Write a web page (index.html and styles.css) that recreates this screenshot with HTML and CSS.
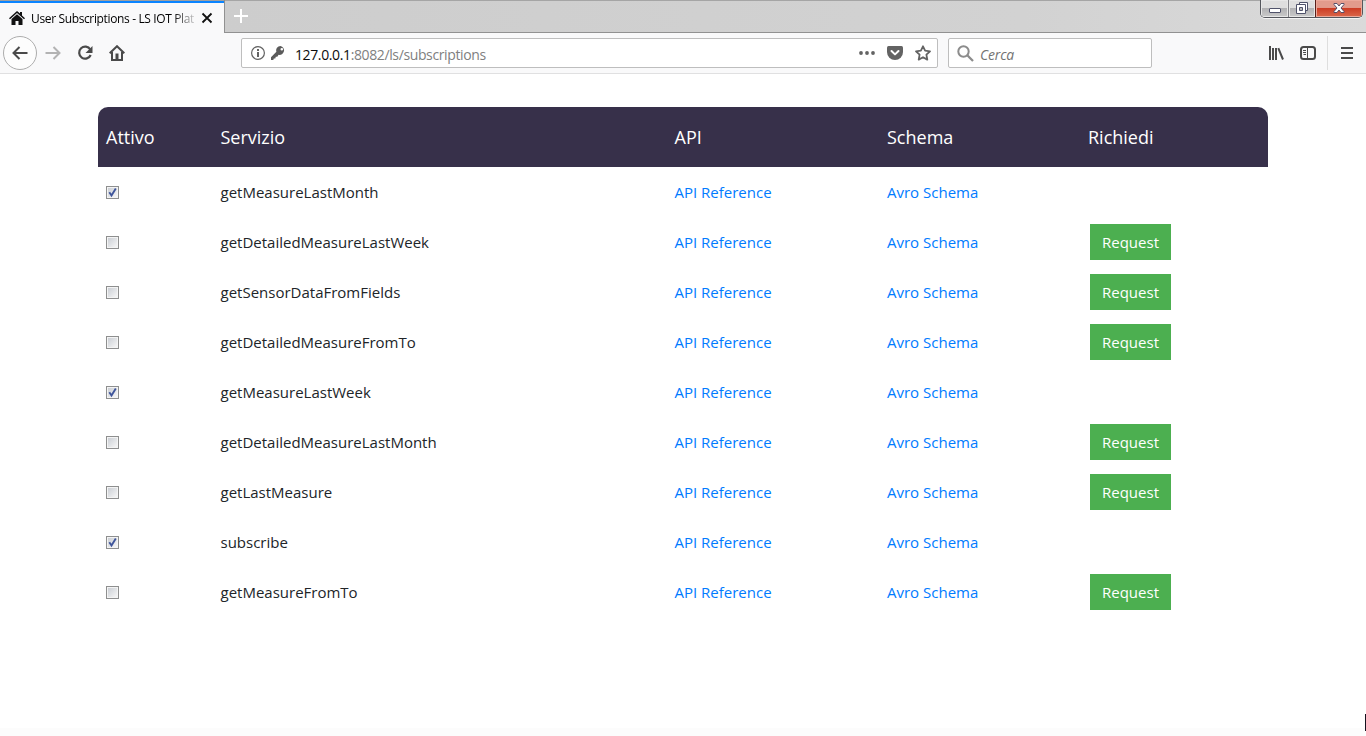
FILE: index.html
```html
<!DOCTYPE html>
<html lang="it">
<head>
<meta charset="utf-8">
<title>User Subscriptions - LS IOT Platform</title>
<link rel="stylesheet" href="styles.css">
</head>
<body>
<header class="tabs">
  <div class="tab">
    <svg class="favicon" width="16" height="16" viewBox="0 0 16 16"><path d="M8 1 0 8.2l1 1.1L8 3l7 6.3 1-1.1-3-2.8V2h-2v1.6z" fill="#111"/><path d="M8 4.2 2.500 9v6h4v-4h3v4h4V9z" fill="#111"/></svg>
    <span class="tab-title">User Subscriptions - LS IOT Plat</span>
    <svg class="tab-close" width="12" height="12" viewBox="0 0 12 12"><path d="m1.500 1.500 9 9m0-9-9 9" stroke="#111" stroke-width="1.800"/></svg>
  </div>
  <div class="strip">
    <svg class="plus" width="14" height="14" viewBox="0 0 14 14"><path d="M7 0v14M0 7h14" stroke="#fff" stroke-width="2"/></svg>
    <div class="win">
      <span class="win-btn min"><svg width="14" height="16" viewBox="0 0 14 16"><rect x="1.500" y="8.500" width="11" height="4" rx=".5" fill="#fff" stroke="#50536b"/></svg></span>
      <span class="win-btn max"><svg width="14" height="16" viewBox="0 0 14 16"><g fill="#fff" stroke="#50536b"><path d="M4.500 2.500h8v8h-8z"/><path d="M1.500 4.500h9v9h-9z"/><path d="M4.500 7.500h3v3h-3z" fill="#bbb"/></g></svg></span>
      <span class="win-btn quit"><svg width="14" height="16" viewBox="0 0 14 16"><path d="M2 3.500h3L7 6l2-2.500h3v1L9 8l3 3.500v1H9L7 10l-2 2.500H2v-1L5 8 2 4.500z" fill="#fff" stroke="#57506a"/></svg></span>
    </div>
  </div>
</header>
<nav class="toolbar">
  <span class="back"><svg width="16" height="16" viewBox="0 0 16 16"><path d="M15.500 8H1.500M7.500 2 1.500 8l6 6" fill="none" stroke="#4a4a4a" stroke-width="2"/></svg></span>
  <svg class="forward" width="16" height="16" viewBox="0 0 16 16"><path d="M.5 8h14M8.500 2l6 6-6 6" fill="none" stroke="#b3b3b3" stroke-width="2"/></svg>
  <svg class="reload" width="16" height="16" viewBox="0 0 16 16"><path d="M13.300 4.500A6 6 0 1 0 13.700 10" fill="none" stroke="#4a4a4a" stroke-width="2.200"/><path d="M15.500 1v7h-7z" fill="#4a4a4a"/></svg>
  <svg class="home" width="16" height="16" viewBox="0 0 16 16"><path d="M.7 8.300 8 1.200l7.300 7.100M3 7v8h10V7" fill="none" stroke="#4a4a4a" stroke-width="2"/><path d="M6.500 8.500h3V14h-3z" fill="#4a4a4a"/></svg>
  <div class="address">
    <svg class="info" width="14" height="14" viewBox="0 0 14 14"><circle cx="7" cy="7" r="6.400" fill="none" stroke="#636363" stroke-width="1.200"/><path d="M6 6h2v5H6zM6 3h2v2H6z" fill="#636363"/></svg>
    <svg class="key" width="14" height="14" viewBox="0 0 14 14"><path fill-rule="evenodd" d="M9.500 0A4.300 4.300 0 0 0 5.400 5.700L0 11.200V14h2.300l.5-1.500h1.500l.5-1.800h1.500l1.300-1.900A4.400 4.400 0 1 0 9.500 0zM10.800 1.900a1.300 1.300 0 1 1 0 2.600 1.300 1.300 0 0 1 0-2.600z" fill="#5b5b5b"/></svg>
    <span class="url"><b>127.0.0.1</b>:8082/ls/subscriptions</span>
    <svg class="dots" width="16" height="16" viewBox="0 0 16 16"><g fill="#636363"><circle cx="2" cy="8" r="1.900"/><circle cx="8" cy="8" r="1.900"/><circle cx="14" cy="8" r="1.900"/></g></svg>
    <svg class="pocket" width="16" height="16" viewBox="0 0 16 16"><path d="M1.500 1h13Q16 1 16 2.500V7A8 8 0 0 1 0 7V2.500Q0 1 1.500 1z" fill="#636363"/><path d="m4.500 6 3.500 3.400L11.500 6" fill="none" stroke="#fff" stroke-width="2" stroke-linecap="round" stroke-linejoin="round"/></svg>
    <svg class="star" width="16" height="16" viewBox="0 0 16 16"><path d="m8 1.300 2.100 4.400 4.900.6-3.600 3.400.9 4.900L8 12.200l-4.300 2.400.9-4.900L1 6.300l4.900-.6z" fill="none" stroke="#636363" stroke-width="1.800" stroke-linejoin="round"/></svg>
  </div>
  <div class="search">
    <svg width="17" height="17" viewBox="0 0 17 17"><circle cx="6.500" cy="6.500" r="5.200" fill="none" stroke="#8c8c8c" stroke-width="2"/><path d="m10.300 10.300 5.700 5.700" stroke="#8c8c8c" stroke-width="2.300"/></svg>
    <span>Cerca</span>
  </div>
  <svg class="library" width="16" height="16" viewBox="0 0 16 16"><path d="M2 1v14M5 3v12M8 3v12M10.300 3.200 15 14.500" stroke="#4a4a4a" stroke-width="2" fill="none"/></svg>
  <svg class="sidebar" width="16" height="16" viewBox="0 0 16 16"><rect x="1" y="2" width="14" height="12" rx="2.500" fill="none" stroke="#4a4a4a" stroke-width="2"/><path d="M7.500 2v12M3 5.500h3M3 7.500h3M3.500 9.500H6" stroke="#4a4a4a"/></svg>
  <div class="menu"><svg width="12" height="12" viewBox="0 0 12 12"><path d="M0 1h12M0 6h12M0 11h12" stroke="#4a4a4a" stroke-width="2"/></svg></div>
</nav>
<main class="page">
  <div class="row head"><span>Attivo</span><span>Servizio</span><span>API</span><span>Schema</span><span>Richiedi</span></div>
  <div id="rows"></div>
</main>
<i class="edge-mark"></i>
<script src="rows.js"></script>
</body>
</html>
```
FILE: rows.js
```js
const services = [
  ["getMeasureLastMonth", true],
  ["getDetailedMeasureLastWeek", false],
  ["getSensorDataFromFields", false],
  ["getDetailedMeasureFromTo", false],
  ["getMeasureLastWeek", true],
  ["getDetailedMeasureLastMonth", false],
  ["getLastMeasure", false],
  ["subscribe", true],
  ["getMeasureFromTo", false]
];
const tick = '<svg width="11" height="11" viewBox="0 0 11 11"><path d="M2.300 5.300 4.500 8.500 8.800 1.500" fill="none" stroke="#3f559b" stroke-width="1.900"/></svg>';
document.getElementById("rows").innerHTML = services.map(([name, active]) => `
  <div class="row">
    <span><i class="check">${active ? tick : ""}</i></span>
    <span>${name}</span>
    <span><a>API Reference</a></span>
    <span><a>Avro Schema</a></span>
    <span>${active ? "" : '<button class="request">Request</button>'}</span>
  </div>`).join("");
```
FILE: styles.css
```css
* { box-sizing: border-box; }
body {
  margin: 0;
  height: 736px;
  overflow: hidden;
  background: linear-gradient(#fff 728px, #fcfcfc 728px);
  font-family: "Open Sans", "Noto Sans", sans-serif;
  color: #212529;
}
svg { display: block; flex: none; }
.tabs { display: flex; height: 33px; background: #f9f9fa; }
.tab {
  display: flex;
  align-items: center;
  width: 224px;
  padding: 2px 0 0 9px;
  border-top: 1px solid #a0a0a0;
  box-shadow: inset 0 2px #0a84ff;
}
.tab-title {
  width: 166px;
  margin-left: 6px;
  white-space: nowrap;
  font-size: 12px;
  letter-spacing: -0.36px;
  color: #000;
  -webkit-mask-image: linear-gradient(90deg, #000 142px, transparent 168px);
  mask-image: linear-gradient(90deg, #000 142px, transparent 168px);
}
.tab-close { margin-left: 4px; }
.strip {
  display: flex;
  flex: 1;
  justify-content: space-between;
  padding: 0 3px 0 9px;
  border-left: 1px solid #919191;
  border-bottom: 1px solid #919191;
  background: linear-gradient(90deg, #cdcdcd, #d2d2d2 70%, #dadada);
  box-shadow: inset 0 1px #a5a5a5;
}
.plus { margin-top: 9px; }
.win {
  display: flex;
  height: 18px;
  border: 1px solid #55575d;
  border-top: 0;
  border-radius: 0 0 5px 5px;
  overflow: hidden;
  box-shadow: 0 1px #f5f5f5;
}
.win-btn {
  display: flex;
  justify-content: center;
  background: linear-gradient(#dedede 0 45%, #b1b1b3 48%, #cacaca);
  box-shadow: inset 0 0 0 1px #e7e7e7;
}
.min { width: 27px; }
.max { width: 27px; border-left: 1px solid #808085; }
.quit {
  width: 47px;
  border-left: 1px solid #591f19;
  background: linear-gradient(#e29b8c 0 44%, #cc3c24 48%, #db684b);
  box-shadow: inset 0 0 0 1px #eba99b;
}
.toolbar {
  display: flex;
  align-items: center;
  height: 41px;
  padding-left: 3px;
  border-bottom: 1px solid #e0e0e1;
  background: #f9f9fa;
}
.back {
  display: grid;
  place-items: center;
  width: 34px;
  height: 34px;
  border: 1px solid #adadad;
  border-radius: 50%;
  background: #fdfdfd;
}
.forward { margin-left: 8px; }
.reload, .home { margin-left: 16px; }
.address, .search {
  display: flex;
  align-items: center;
  height: 30px;
  border: 1px solid #bebebe;
  border-radius: 2px;
  background: #fff;
}
.address { width: 697px; margin-left: 116px; padding-left: 9px; }
.key { margin-left: 6px; }
.url {
  flex: 1;
  margin: 2px 0 0 10px;
  font-size: 14px;
  letter-spacing: -0.38px;
  color: #808080;
}
.url b { font-weight: 400; color: #0c0c0d; }
.pocket, .star { margin-left: 12px; }
.star { margin-right: 6px; }
.search {
  width: 204px;
  margin-left: 10px;
  padding-left: 8px;
  font-size: 14px;
  font-style: italic;
  color: #737373;
}
.search span { margin: 2px 0 0 6px; letter-spacing: -0.2px; }
.library { margin-left: 116px; }
.sidebar { margin-left: 16px; }
.menu {
  display: grid;
  place-items: center;
  width: 39px;
  height: 34px;
  margin-left: 11px;
  border-left: 1px solid #dedede;
}
.page { width: 1170px; margin: 33px auto 0; }
.row {
  display: grid;
  grid-template-columns: 114.5px 454px 212.500px 201px 1fr;
  align-items: center;
  height: 50px;
  font-size: 15px;
}
.row > span { padding-left: 8px; }
.head {
  height: 60px;
  border-radius: 10px 10px 0 0;
  background: #37304a;
  color: #fff;
  font-size: 18px;
}
.row a { color: #007bff; }
.check {
  display: block;
  width: 13px;
  height: 13px;
  border: 1px solid #8e8f8f;
  background: linear-gradient(135deg, #cbcfd5, #f6f6f6) center / 9px 9px no-repeat #f4f4f4;
}
.request {
  display: block;
  width: 81px;
  height: 36px;
  margin-left: 2px;
  padding: 0;
  border: 0;
  background: #4caf50;
  color: #fff;
  font: 15px "Open Sans", sans-serif;
}
.edge-mark {
  position: absolute;
  right: 0;
  top: 714px;
  width: 1px;
  height: 17px;
  background: #15121e;
}
```
